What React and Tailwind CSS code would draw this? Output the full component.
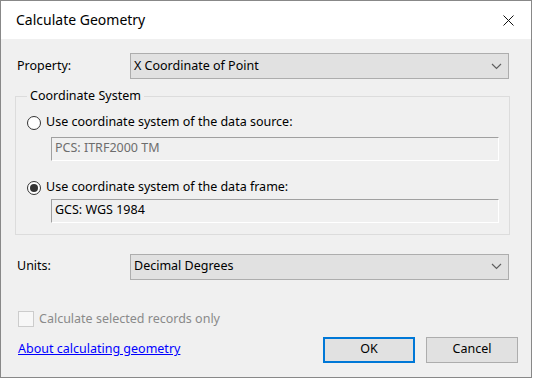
import React from 'react';

const font = { fontFamily: '"Segoe UI", "Noto Sans", sans-serif' };

function Chevron() {
  return (
    <svg width="11" height="7" viewBox="0 0 11 7" className="shrink-0">
      <path d="M1 1 L5.5 5.5 L10 1" fill="none" stroke="#5f5f5f" strokeWidth="1.2" />
    </svg>
  );
}

function Select({ value }) {
  return (
    <div className="flex items-center justify-between w-[379px] h-[26px] bg-[#e1e1e1] border border-[#adadad] pl-[3px] pr-[6px]">
      <span>{value}</span>
      <Chevron />
    </div>
  );
}

function Radio({ checked, label }) {
  return (
    <div className="flex items-center h-[16px]">
      <span className="ml-[11px] w-[14px] h-[14px] rounded-full border border-[#333] bg-white flex items-center justify-center">
        {checked && <span className="w-[8px] h-[8px] rounded-full bg-[#333]" />}
      </span>
      <span className="ml-[5px]">{label}</span>
    </div>
  );
}

function ReadBox({ value, dim }) {
  return (
    <div
      className={`ml-[35px] w-[448px] h-[24px] flex items-center pl-[3px] bg-[#f0f0f0] border-t border-l border-[#a0a0a0] border-b-white border-r-white border-b border-r ${dim ? 'text-[#6d6d6d]' : 'text-black'}`}
    >
      {value}
    </div>
  );
}

export default function App() {
  return (
    <div className="w-[533px] h-[379px] bg-white" style={font}>
      <div className="w-[532px] h-[378px] border border-[#888] flex flex-col text-[12.5px] text-black">
        {/* title bar */}
        <div className="h-[38px] bg-white flex items-center justify-between pl-[15px] pr-[17px]">
          <span className="text-[14px] pb-[1px]">Calculate Geometry</span>
          <svg width="11" height="11" viewBox="0 0 11 11">
            <path d="M0.5 0.5 L10.5 10.5 M10.5 0.5 L0.5 10.5" stroke="#111" strokeWidth="1" />
          </svg>
        </div>

        <div className="flex-1 bg-[#f0f0f0] px-[14px] pt-[14px] flex flex-col">
          <div className="flex items-center">
            <span className="w-[115px] pl-[2px]">Property:</span>
            <Select value="X Coordinate of Point" />
          </div>

          <fieldset className="mt-[8px] w-[495px] border border-[#dcdcdc] pb-[11px]">
            <legend className="ml-[11px] px-[3px]">Coordinate System</legend>
            <div className="mt-[9px]">
              <Radio label="Use coordinate system of the data source:" />
            </div>
            <div className="mt-[6px]">
              <ReadBox value="PCS: ITRF2000 TM" dim />
            </div>
            <div className="mt-[19px]">
              <Radio checked label="Use coordinate system of the data frame:" />
            </div>
            <div className="mt-[3px]">
              <ReadBox value="GCS: WGS 1984" />
            </div>
          </fieldset>

          <div className="flex items-center mt-[19px]">
            <span className="w-[115px] pl-[2px]">Units:</span>
            <Select value="Decimal Degrees" />
          </div>

          <div className="flex items-center mt-[31px] h-[17px]">
            <span className="ml-[3px] w-[16px] h-[16px] border border-[#cccccc] bg-[#f7f7f7]" />
            <span className="ml-[5px] text-[#8a8a8a]">Calculate selected records only</span>
          </div>

          <div className="flex items-center justify-between mt-[9px]">
            <a href="#" className="ml-[3px] text-[#0000ff] underline">About calculating geometry</a>
            <div className="flex gap-[11px] -mr-[1px]">
              <button className="w-[92px] h-[26px] bg-[#e1e1e1] border-2 border-[#0078d7]">OK</button>
              <button className="w-[92px] h-[26px] bg-[#e1e1e1] border border-[#adadad]">Cancel</button>
            </div>
          </div>
        </div>
      </div>
    </div>
  );
}
